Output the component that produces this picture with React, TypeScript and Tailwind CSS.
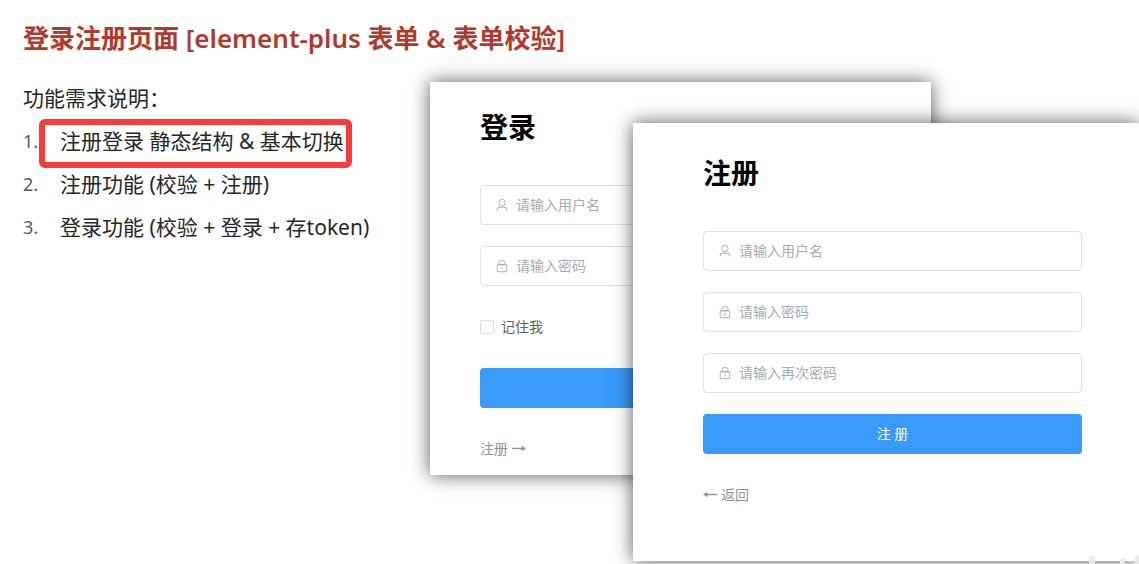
import type { ReactNode } from "react";

type FieldProps = {
    id: string;
    type: string;
    placeholder: string;
    icon: ReactNode;
};

const requirements = [
    { text: "注册登录 静态结构 & 基本切换", marked: true },
    { text: "注册功能 (校验 + 注册)", marked: false },
    { text: "登录功能 (校验 + 登录 + 存token)", marked: false },
];

function UserIcon() {
    return (
        <svg viewBox="0 0 1024 1024" className="size-3.5 shrink-0" fill="currentColor" aria-hidden="true">
            <path d="M512 512a192 192 0 1 0 0-384 192 192 0 0 0 0 384m0 64a256 256 0 1 1 0-512 256 256 0 0 1 0 512m320 320v-32a160 160 0 0 0-160-160H352a160 160 0 0 0-160 160v32a32 32 0 1 1-64 0v-32a224 224 0 0 1 224-224h320a224 224 0 0 1 224 224v32a32 32 0 1 1-64 0" />
        </svg>
    );
}

function LockIcon() {
    return (
        <svg viewBox="0 0 1024 1024" className="size-3.5 shrink-0" fill="currentColor" aria-hidden="true">
            <path d="M224 448a32 32 0 0 0-32 32v384a32 32 0 0 0 32 32h576a32 32 0 0 0 32-32V480a32 32 0 0 0-32-32zm0-64h576a96 96 0 0 1 96 96v384a96 96 0 0 1-96 96H224a96 96 0 0 1-96-96V480a96 96 0 0 1 96-96" />
            <path d="M512 544a32 32 0 0 1 32 32v192a32 32 0 1 1-64 0V576a32 32 0 0 1 32-32m192-160v-64a192 192 0 1 0-384 0v64zM512 64a256 256 0 0 1 256 256v128H256V320A256 256 0 0 1 512 64" />
        </svg>
    );
}

function Arrow({ flip = false }: { flip?: boolean }) {
    return (
        <svg viewBox="0 0 14 8" className={`w-3.5 h-2 ${flip ? "-scale-x-100" : ""}`} aria-hidden="true">
            <path d="M0 3.5h11" stroke="currentColor" strokeWidth="1.4" />
            <path d="M9.5 .7 14 3.5 9.5 6.3z" fill="currentColor" />
        </svg>
    );
}

function Field({ id, type, placeholder, icon }: FieldProps) {
    return (
        <label
            htmlFor={id}
            className="h-10 flex items-center gap-[7px] px-[14px] rounded border border-[#dfe1e6] text-[#a8abb2]"
        >
            {icon}
            <input
                id={id}
                type={type}
                placeholder={placeholder}
                aria-label={placeholder}
                className="min-w-0 flex-1 bg-transparent outline-none text-sm text-gray-700 placeholder:text-[#a8abb2]"
            />
        </label>
    );
}

function LoginCard() {
    return (
        <form
            id="login"
            className="col-start-1 row-start-1 self-start mr-[208px] pl-[50px] pr-[72px] pt-6 pb-[6px] bg-white shadow-[0_0_18px_rgba(0,0,0,0.65)]"
        >
            <h2 className="mb-[37px] text-[28px] leading-[42px] font-bold text-black">登录</h2>
            <div className="flex flex-col gap-[21px]">
                <Field id="login-name" type="text" placeholder="请输入用户名" icon={<UserIcon />} />
                <Field id="login-password" type="password" placeholder="请输入密码" icon={<LockIcon />} />
                <label htmlFor="remember" className="h-10 flex items-center gap-[7px] text-sm text-[#606266]">
                    <input
                        id="remember"
                        type="checkbox"
                        className="appearance-none size-3.5 rounded-xs border border-[#dcdfe6] bg-white checked:bg-[#389bfa]"
                    />
                    记住我
                </label>
                <button type="button" className="h-10 rounded bg-[#389bfa] text-sm text-white">登 录</button>
                <a href="#register" className="h-10 flex items-center gap-1 text-sm text-[#909399]">
                    注册
                    <Arrow />
                </a>
            </div>
        </form>
    );
}

function RegisterCard() {
    return (
        <form
            id="register"
            className="col-start-1 row-start-1 self-start ml-[203px] mt-[41px] pl-[70px] pr-[57px] pt-[29px] pb-[46px] bg-white shadow-[0_0_18px_rgba(0,0,0,0.65)]"
        >
            <h2 className="mb-[37px] text-[28px] leading-[42px] font-bold text-black">注册</h2>
            <div className="flex flex-col gap-[21px]">
                <Field id="reg-name" type="text" placeholder="请输入用户名" icon={<UserIcon />} />
                <Field id="reg-password" type="password" placeholder="请输入密码" icon={<LockIcon />} />
                <Field id="reg-repeat" type="password" placeholder="请输入再次密码" icon={<LockIcon />} />
                <button type="button" className="h-10 rounded bg-[#389bfa] text-sm text-white">注 册</button>
                <a href="#login" className="h-10 flex items-center gap-1 text-sm text-[#909399]">
                    <Arrow flip />
                    返回
                </a>
            </div>
        </form>
    );
}

export default function App() {
    return (
        <main className="relative min-h-screen overflow-hidden bg-white font-['Noto_Sans','Noto_Sans_CJK_SC',sans-serif]">
            <header className="h-[77px] flex items-center pl-[23px]">
                <h1 className="text-[26px] font-semibold text-[#b03a2e]">
                    登录注册页面 [element-plus 表单 &amp; 表单校验]
                </h1>
            </header>

            <div className="grid grid-cols-[430px_1fr]">
                <section className="pl-[23px] text-[21px] leading-[43px] text-[#262626]">
                    <p>功能需求说明：</p>
                    <ol>
                        {requirements.map((item, index) => (
                            <li key={item.text} className="flex whitespace-nowrap">
                                <span className="w-[37px] text-lg leading-[43px] text-[#595959]">{index + 1}.</span>
                                <span className="relative">
                                    {item.text}
                                    {item.marked && (
                                        <span className="absolute -left-[21px] -right-2 -top-px -bottom-[5px] rounded-md border-6 border-[#fb3a3a]" />
                                    )}
                                </span>
                            </li>
                        ))}
                    </ol>
                </section>

                <section className="grid mt-[5px]">
                    <LoginCard />
                    <RegisterCard />
                </section>
            </div>

            {/* tips of the watermark cut off by the page's lower edge */}
            <svg viewBox="0 0 52 10" className="absolute bottom-0 right-0 w-[52px] h-[10px]" fill="#e9e9e9" aria-hidden="true">
                <path d="M1 4 8 1v9H2V6zM33 5l5-1v6h-5zM48 3l4-2v9h-4z" />
            </svg>
        </main>
    );
}
